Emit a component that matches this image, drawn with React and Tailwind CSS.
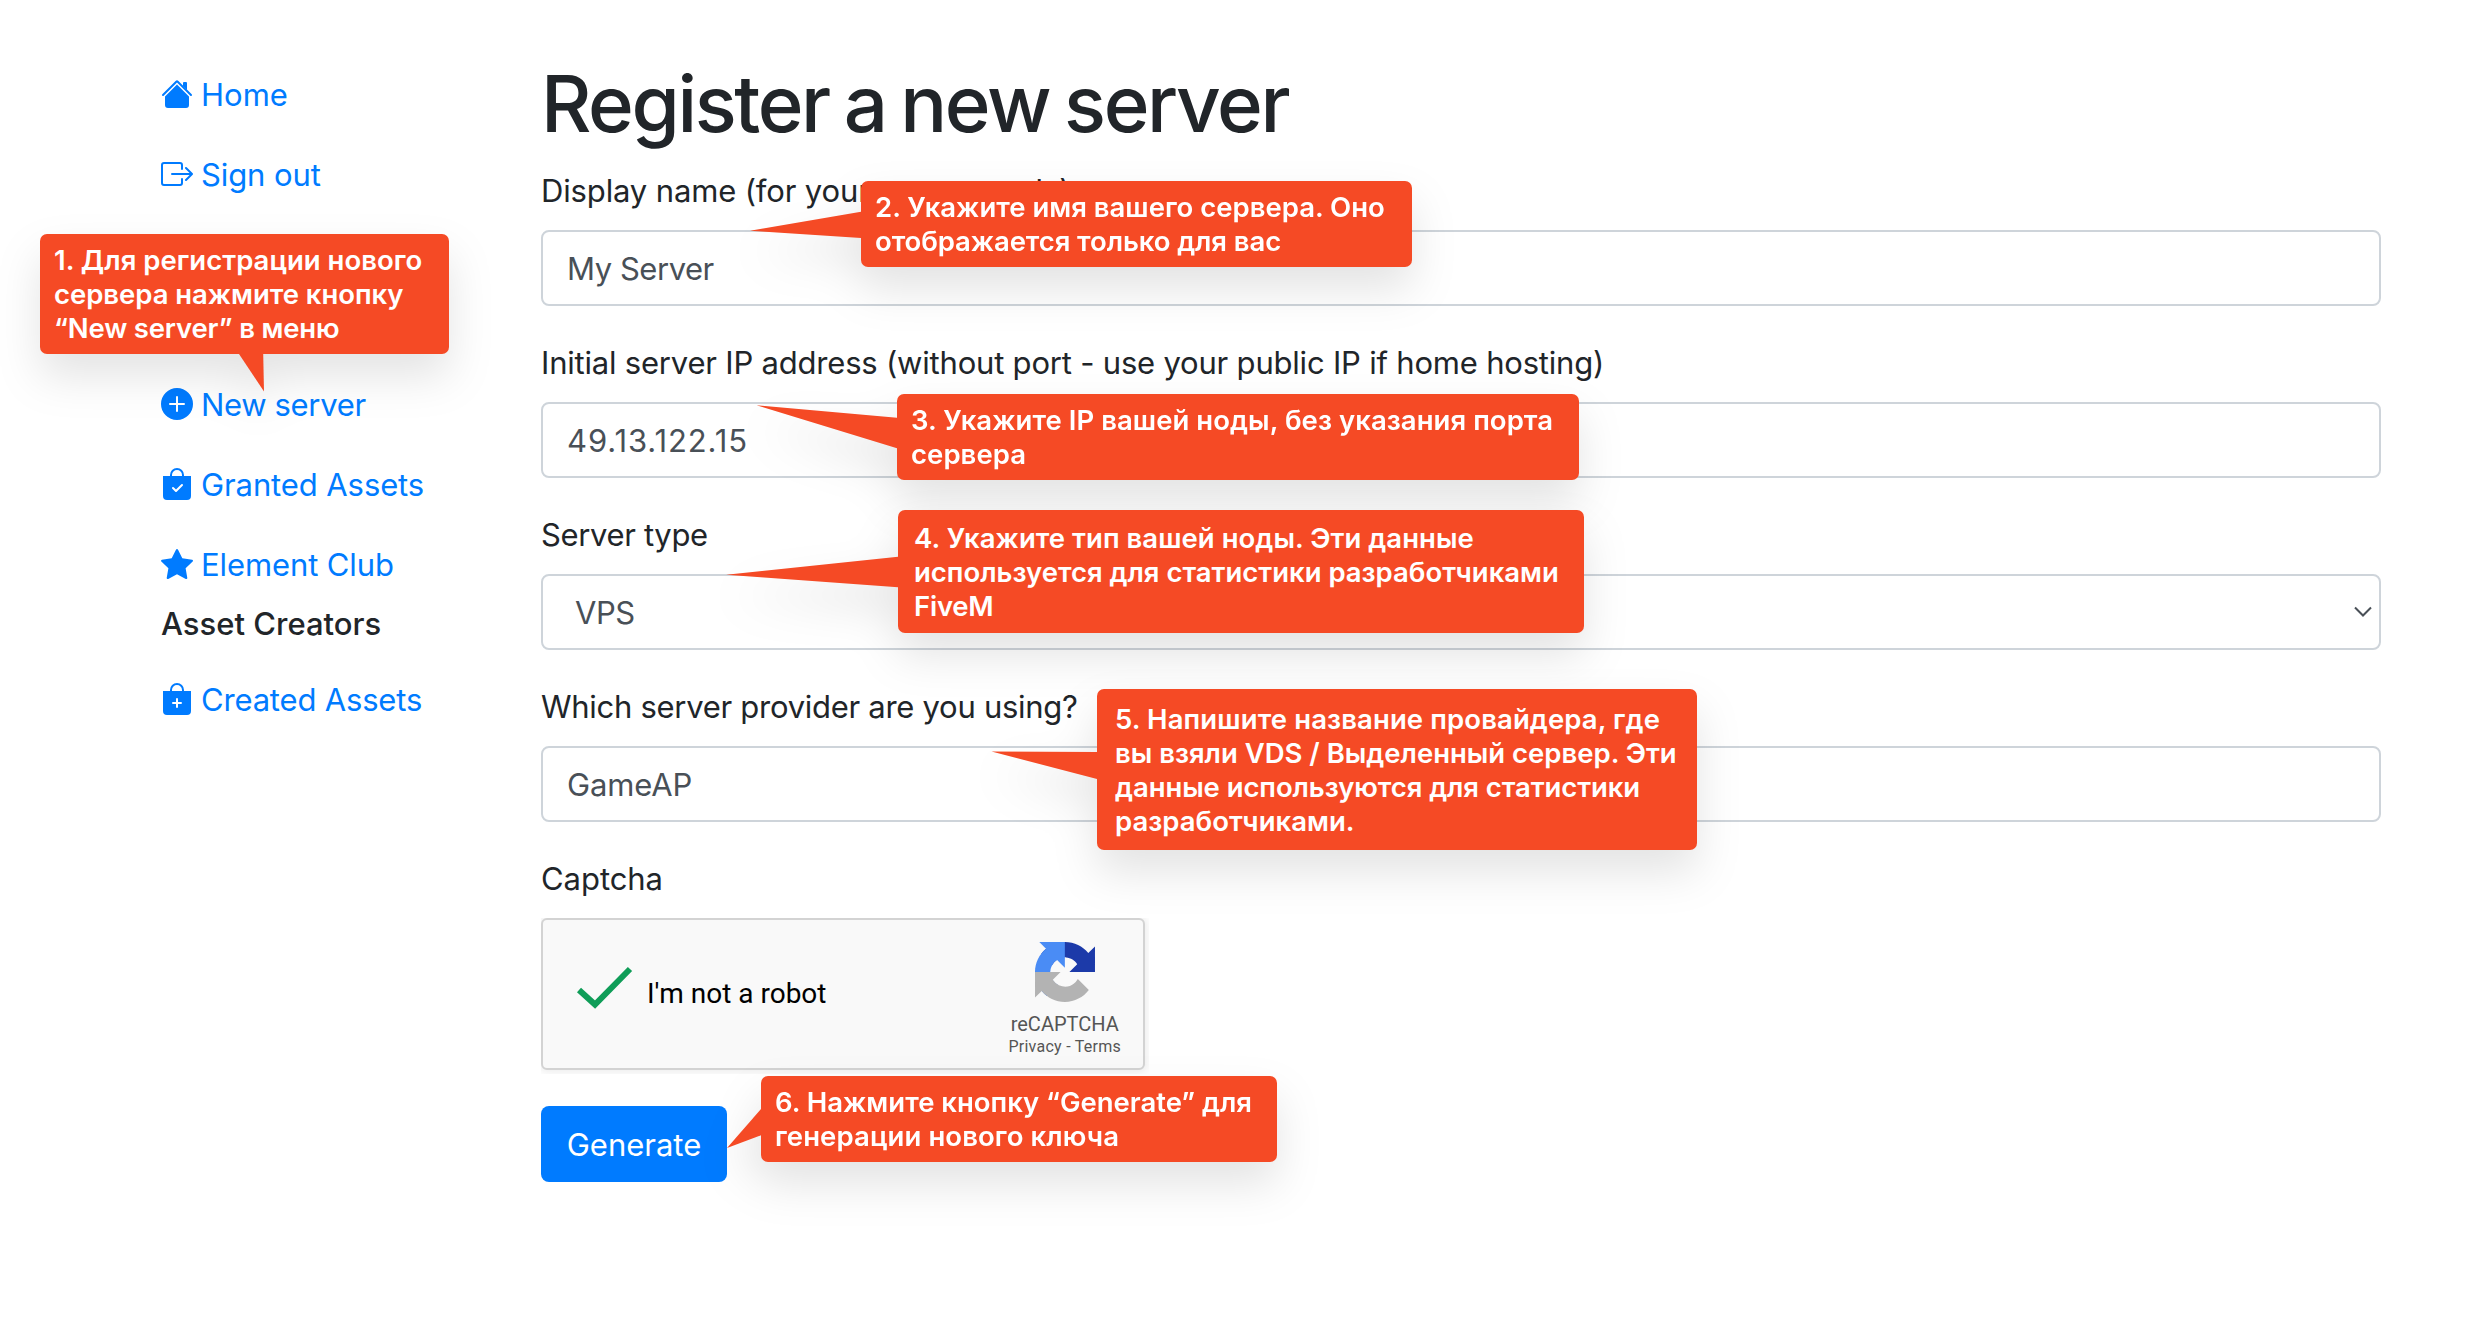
import React from "react";
import {
  BsBoxArrowRight,
  BsPlusCircleFill,
  BsBagCheckFill,
  BsStarFill,
  BsBagPlusFill,
} from "react-icons/bs";

function HouseIcon({ className }) {
  return (
    <svg viewBox="0 0 16 16" fill="currentColor" className={className}>
      <path d="M8 3.293l6 6V13.5a1.5 1.5 0 0 1-1.5 1.5h-9A1.5 1.5 0 0 1 2 13.5V9.293l6-6zm5-.793V6l-2-2V2.5a.5.5 0 0 1 .5-.5h1a.5.5 0 0 1 .5.5z" />
      <path d="M7.293 1.5a1 1 0 0 1 1.414 0l6.647 6.646a.5.5 0 0 1-.708.708L8 2.207 1.354 8.854a.5.5 0 1 1-.708-.708L7.293 1.5z" />
    </svg>
  );
}

const accountLinks = [
  { icon: HouseIcon, label: "Home", tracking: "tracking-[0px]" },
  { icon: BsBoxArrowRight, label: "Sign out", tracking: "tracking-[-0.1px]" },
];

const serverLinks = [
  { icon: BsPlusCircleFill, label: "New server", tracking: "tracking-[-0.34px]" },
  { icon: BsBagCheckFill, label: "Granted Assets", tracking: "tracking-[-0.1px]" },
  { icon: BsStarFill, label: "Element Club", tracking: "tracking-[-0.1px]" },
];

const creatorLinks = [
  { icon: BsBagPlusFill, label: "Created Assets", tracking: "tracking-[-0.18px]" },
];

function NavLinks({ items }) {
  return (
    <ul>
      {items.map(({ icon: Icon, label, tracking }) => (
        <li key={label}>
          <a href="#" className="flex py-4 text-[#007bff]">
            <Icon className="mt-[7px] mr-2 size-8 shrink-0" />
            <span className={tracking}>{label}</span>
          </a>
        </li>
      ))}
    </ul>
  );
}

function Sidebar() {
  return (
    <nav className="w-[380px] shrink-0 pt-[1px]">
      <NavLinks items={accountLinks} />
      <div className="mt-[150px]">
        <NavLinks items={serverLinks} />
      </div>
      <h5 className="mb-4 h-[39px] text-[31px] leading-[38.4px] font-medium tracking-[0px]">
        Asset Creators
      </h5>
      <NavLinks items={creatorLinks} />
    </nav>
  );
}

function Field({ label, labelTracking, value, valueTracking, select }) {
  return (
    <div className="mb-8">
      <label className={`mb-[14px] block leading-[50px] ${labelTracking}`}>{label}</label>
      <div
        className={`flex h-[76px] items-center justify-between rounded-lg border-2 border-[#ced4da] bg-white pr-[7px] text-[#495057] ${
          select ? "pl-8" : "pl-6"
        }`}
      >
        <span className={`pt-[2px] ${valueTracking}`}>{value}</span>
        {select && (
          <svg viewBox="0 0 18 12" className="h-3 w-[18px]" fill="none">
            <path d="M1 1.5l8 8 8-8" stroke="#495057" strokeWidth="2" />
          </svg>
        )}
      </div>
    </div>
  );
}

function RecaptchaLogo() {
  return (
    <svg viewBox="0 0 64 64" className="size-[60px]">
      <path
        fill="#1c3aa9"
        d="M64 31.955l-.033-1.37V4.687l-7.16 7.16C50.948 4.674 42.033.093 32.05.093c-10.4 0-19.622 4.96-25.458 12.64l11.736 11.86a15.55 15.55 0 0 1 4.754-5.334c2.05-1.6 4.952-2.906 8.968-2.906.485 0 .86.057 1.135.163 4.976.393 9.288 3.14 11.828 7.124l-8.307 8.307L64 31.953"
      />
      <path
        fill="#4a8cf5"
        d="M31.862.094l-1.37.033H4.594l7.16 7.16C4.58 13.147 0 22.06 0 32.046c0 10.4 4.96 19.622 12.64 25.458L24.5 45.768a15.55 15.55 0 0 1-5.334-4.754c-1.6-2.05-2.906-4.952-2.906-8.968 0-.485.057-.86.163-1.135.393-4.976 3.14-9.288 7.124-11.828l8.307 8.307L31.86.095"
      />
      <path
        fill="#b3b3b3"
        d="M.001 32.045l.033 1.37v25.898l7.16-7.16c5.86 7.173 14.774 11.754 24.76 11.754 10.4 0 19.622-4.96 25.458-12.64l-11.736-11.86a15.55 15.55 0 0 1-4.754 5.334c-2.05 1.6-4.952 2.906-8.968 2.906-.485 0-.86-.057-1.135-.163-4.976-.393-9.288-3.14-11.828-7.124l8.307-8.307c-10.522.04-22.4.066-27.295-.005"
      />
    </svg>
  );
}

function Captcha() {
  return (
    <div className="h-[156px] w-[608px] overflow-hidden font-[Roboto,sans-serif]">
      <div className="flex h-[152px] w-[604px] items-start justify-between rounded-md border-2 border-[#d3d3d3] bg-[#f9f9f9] pr-[22px] pl-8 shadow-[0_0_8px_2px_rgba(0,0,0,0.08)]">
        <div className="flex">
          <svg viewBox="0 0 60 46" className="mt-[45px] h-[46px] w-[60px]" fill="none">
            <path d="M4 25L20 39.5L55 4" stroke="#0f9d58" strokeWidth="6" />
          </svg>
          <span className="mt-[57px] ml-3 text-[28px] leading-[34px] text-black">I'm not a robot</span>
        </div>
        <div className="flex flex-col items-center text-[#555]">
          <div className="mt-[22px]">
            <RecaptchaLogo />
          </div>
          <span className="mt-[10px] text-[20px] leading-6">reCAPTCHA</span>
          <span className="mt-[1px] text-[16px] leading-5 tracking-[0.26px]">Privacy - Terms</span>
        </div>
      </div>
    </div>
  );
}

function Callout({ box, pad, lines, pointer, pointerBox, viewBox }) {
  return (
    <div className={`absolute drop-shadow-[0_22px_22px_rgba(0,0,0,0.11)] ${box}`}>
      <svg viewBox={viewBox} className={`absolute ${pointerBox}`} fill="#f54a25">
        <polygon points={pointer} />
      </svg>
      <div className={`relative h-full w-full rounded-[7px] bg-[#f54a25] ${pad}`}>
        {lines.map(([text, tracking]) => (
          <p key={text} className={`text-[27.5px] leading-[34px] font-semibold whitespace-nowrap text-white ${tracking}`}>
            {text}
          </p>
        ))}
      </div>
    </div>
  );
}

/* Each pointer polygon is drawn in coordinates relative to its callout's box. */
const callouts = [
  {
    box: "left-[40px] top-[234px] h-[120px] w-[409px]",
    pad: "pl-[14px] pt-[9px]",
    viewBox: "190 110 40 50",
    pointerBox: "left-[190px] top-[110px] h-[50px] w-[40px]",
    pointer: "193,110 223,110 224,157.5 199,120",
    lines: [
      ["1. Для регистрации нового", "tracking-[0.02px]"],
      ["сервера нажмите кнопку", "tracking-[-0.04px]"],
      ["“New server” в меню", "tracking-[-0.17px]"],
    ],
  },
  {
    box: "left-[861px] top-[181px] h-[86px] w-[551px]",
    pad: "pl-[14px] pt-[9px]",
    viewBox: "-120 20 130 50",
    pointerBox: "left-[-120px] top-[20px] h-[50px] w-[130px]",
    pointer: "-111,49.8 0,30.7 5,30 5,57.5 0,57",
    lines: [
      ["2. Укажите имя вашего сервера. Оно", "tracking-[0px]"],
      ["отображается только для вас", "tracking-[-0.09px]"],
    ],
  },
  {
    box: "left-[897px] top-[394px] h-[86px] w-[682px]",
    pad: "pl-[14px] pt-[9px]",
    viewBox: "-150 0 160 70",
    pointerBox: "left-[-150px] top-[0px] h-[70px] w-[160px]",
    pointer: "-140.5,11.3 0,23.7 5,24 5,56 0,54.3",
    lines: [
      ["3. Укажите IP вашей ноды, без указания порта", "tracking-[0.05px]"],
      ["сервера", "tracking-[0.05px]"],
    ],
  },
  {
    box: "left-[898px] top-[510px] h-[123px] w-[686px]",
    pad: "pl-[16px] pt-[11px]",
    viewBox: "-180 30 190 60",
    pointerBox: "left-[-180px] top-[30px] h-[60px] w-[190px]",
    pointer: "-171.8,64.7 0,46.7 5,46 5,77.7 0,77.3",
    lines: [
      ["4. Укажите тип вашей ноды. Эти данные", "tracking-[0.04px]"],
      ["используется для статистики разработчиками", "tracking-[-0.01px]"],
      ["FiveM", "tracking-[-0.24px]"],
    ],
  },
  {
    box: "left-[1097px] top-[689px] h-[161px] w-[600px]",
    pad: "pl-[18px] pt-[13px]",
    viewBox: "-120 50 130 50",
    pointerBox: "left-[-120px] top-[50px] h-[50px] w-[130px]",
    pointer: "-105.5,62.4 0,63 5,63 5,91.5 0,90",
    lines: [
      ["5. Напишите название провайдера, где", "tracking-[0.11px]"],
      ["вы взяли VDS / Выделенный сервер. Эти", "tracking-[-0.01px]"],
      ["данные используются для статистики", "tracking-[-0.08px]"],
      ["разработчиками.", "tracking-[0.02px]"],
    ],
  },
  {
    box: "left-[761px] top-[1076px] h-[86px] w-[516px]",
    pad: "pl-[14px] pt-[9px]",
    viewBox: "-40 20 50 60",
    pointerBox: "left-[-40px] top-[20px] h-[60px] w-[50px]",
    pointer: "-34,72 0,33 5,28 5,57 0,59.3",
    lines: [
      ["6. Нажмите кнопку “Generate” для", "tracking-[-0.01px]"],
      ["генерации нового ключа", "tracking-[0.1px]"],
    ],
  },
];

export default function App() {
  return (
    <div className="relative h-[1320px] w-[2471px] overflow-hidden bg-white font-[Inter,sans-serif] text-[31px] leading-[48px] text-[#212529]">
      <div className="flex pt-[54px] pr-[90px] pl-[161px]">
        <Sidebar />
        <main className="grow">
          <h1 className="mb-3 text-[78px] leading-[100px] font-medium tracking-[-2.4px] [word-spacing:-3.6px]">
            Register a new server
          </h1>
          <Field
            label="Display name (for your own records)"
            labelTracking="tracking-[-0.14px]"
            value="My Server"
            valueTracking="tracking-[-0.46px]"
          />
          <Field
            label="Initial server IP address (without port - use your public IP if home hosting)"
            labelTracking="tracking-[-0.2px]"
            value="49.13.122.15"
            valueTracking="tracking-[0.9px]"
          />
          <Field
            label="Server type"
            labelTracking="tracking-[-0.35px]"
            value="VPS"
            valueTracking="tracking-[-0.5px]"
            select
          />
          <Field
            label="Which server provider are you using?"
            labelTracking="tracking-[-0.28px]"
            value="GameAP"
            valueTracking="tracking-[-0.12px]"
          />
          <div className="mb-8">
            <label className="mb-[14px] block leading-[50px] tracking-[-0.05px]">Captcha</label>
            <Captcha />
          </div>
          <button className="flex h-[76px] w-[186px] items-center justify-center rounded-lg bg-[#007bff] pt-[2px] text-white">
            Generate
          </button>
        </main>
      </div>
      {callouts.map((callout) => (
        <Callout key={callout.box} {...callout} />
      ))}
    </div>
  );
}
